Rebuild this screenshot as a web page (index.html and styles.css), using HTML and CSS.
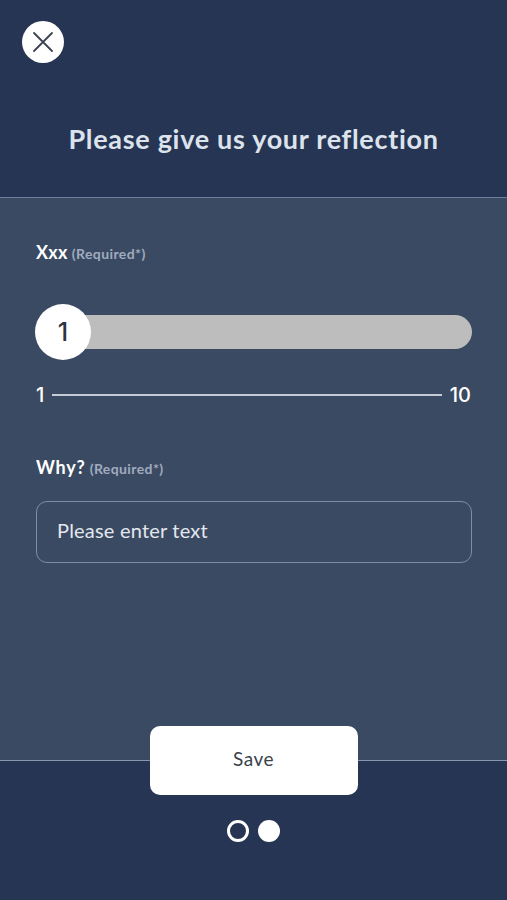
FILE: index.html
```html
<!DOCTYPE html>
<html>
<head>
<meta charset="utf-8">
<link rel="stylesheet" href="styles.css">
</head>
<body>
<div class="screen">
  <header class="top">
    <button class="close" aria-label="Close">
      <svg width="22" height="22" viewBox="0 0 22 22"><path d="M2 2 L20 20 M20 2 L2 20" stroke="#3a4150" stroke-width="1.8" stroke-linecap="round" fill="none"/></svg>
    </button>
    <h1 class="title">Please give us your reflection</h1>
  </header>
  <main class="content">
    <div class="label"><span class="label-main">Xxx</span><span class="req">(Required*)</span></div>
    <div class="slider">
      <div class="track"></div>
      <div class="thumb">1</div>
    </div>
    <div class="scale">
      <span class="num">1</span>
      <span class="scale-line"></span>
      <span class="num">10</span>
    </div>
    <div class="label why"><span class="label-main">Why?</span><span class="req">(Required*)</span></div>
    <div class="input">Please enter text</div>
  </main>
  <footer class="bottom">
    <button class="save">Save</button>
    <div class="dots"><span class="dot hollow"></span><span class="dot filled"></span></div>
  </footer>
</div>
</body>
</html>
```
FILE: styles.css
```css
* { box-sizing: border-box; }
html, body { margin: 0; padding: 0; }
body { font-family: Lato, "Noto Sans", sans-serif; background: #263553; }
.screen { width: 507px; height: 900px; display: flex; flex-direction: column; }
.top { height: 198px; background: #263553; border-bottom: 1px solid #6f7f9b; display: flex; flex-direction: column; padding: 21px 0 0 22px; }
.close { width: 42px; height: 42px; border-radius: 50%; background: #fff; border: none; padding: 0; display: flex; align-items: center; justify-content: center; }
.title { margin: 60px 0 0 -22px; text-align: center; color: #dde3ec; font-size: 27px; font-weight: 700; letter-spacing: 0.7px; line-height: 32px; }
.content { height: 562px; background: #3b4a63; padding: 43px 35px 0 36px; display: flex; flex-direction: column; }
.label { display: flex; align-items: baseline; gap: 4px; color: #fff; }
.label-main { font-size: 18px; font-weight: 700; letter-spacing: 0.3px; }
.why .label-main { letter-spacing: 0.8px; }
.req { font-size: 14px; color: #a0abbe; font-weight: 700; letter-spacing: 0.4px; }
.slider { position: relative; margin-top: 41px; height: 56px; display: flex; align-items: center; }
.track { flex: 1; height: 34px; background: #bdbdbd; border-radius: 17px; }
.thumb { position: absolute; left: -1px; top: 0; width: 56px; height: 56px; border-radius: 50%; background: #fff; display: flex; align-items: center; justify-content: center; font-family: Inter, sans-serif; font-size: 25px; font-weight: 500; color: #2d3340; }
.scale { margin-top: 23px; display: flex; align-items: center; gap: 8px; color: #fff; font-family: Inter, sans-serif; font-size: 20px; font-weight: 500; padding-right: 1px; }
.scale-line { flex: 1; height: 1.5px; background: #c5ccd8; }
.why { margin-top: 49px; }
.input { margin-top: 23px; height: 62px; border: 1.5px solid #7e8ca4; border-radius: 11px; display: flex; align-items: center; padding: 0 0 5px 20px; color: #e3e7ee; font-size: 20px; letter-spacing: 0.2px; }
.bottom { flex: 1; background: #263553; border-top: 1px solid #8897b0; display: flex; flex-direction: column; align-items: center; }
.save { margin-top: -35px; width: 208px; height: 69px; background: #fff; border: none; border-radius: 10px; font-family: Lato, sans-serif; font-size: 19px; letter-spacing: 0.5px; color: #3a3f4c; padding: 0 0 5px; }
.dots { margin-top: 25px; display: flex; gap: 9px; }
.dot { width: 22px; height: 22px; border-radius: 50%; }
.hollow { border: 3px solid #fff; }
.filled { background: #fff; }
```
